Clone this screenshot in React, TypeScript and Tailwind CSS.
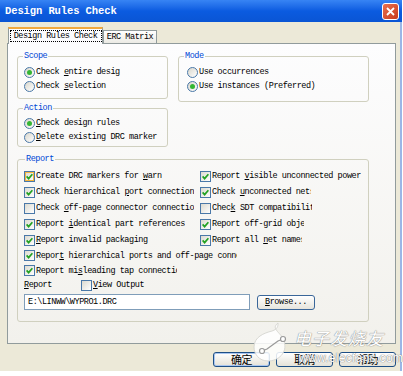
import React from "react";

function Txt({ t, u }: { t: string; u?: number }) {
  if (u === undefined || u < 0) return <>{t}</>;
  return (
    <>
      {t.slice(0, u)}
      <span className="underline underline-offset-[1px]">{t[u]}</span>
      {t.slice(u + 1)}
    </>
  );
}

function Radio({ checked }: { checked?: boolean }) {
  return (
    <span className="w-[11px] h-[11px] rounded-full border border-[#4a78a8] bg-linear-to-br from-[#d8d6cc] to-white flex items-center justify-center shrink-0">
      {checked && <span className="w-[5px] h-[5px] rounded-full bg-[#34b634]" />}
    </span>
  );
}

function Check({ checked, hover }: { checked?: boolean; hover?: boolean }) {
  return (
    <span
      className={
        "w-[11px] h-[11px] border border-[#4a78a8] bg-linear-to-br from-[#dcdad0] to-white flex items-center justify-center shrink-0 " +
        (hover ? "shadow-[inset_0_0_0_1px_#f6b53e]" : "")
      }
    >
      {checked && (
        <svg width="7" height="7" viewBox="0 0 7 7">
          <path d="M0.6 3.4 L2.6 5.6 L6.4 1.2" stroke="#21a121" strokeWidth="1.7" fill="none" />
        </svg>
      )}
    </span>
  );
}

function RadioRow({ t, u, checked }: { t: string; u?: number; checked?: boolean }) {
  return (
    <div className="h-[14px] flex items-center">
      <Radio checked={checked} />
      <span className="ml-[1px] whitespace-nowrap">
        <Txt t={t} u={u} />
      </span>
    </div>
  );
}

function CheckItem({ t, u, checked, hover, clip }: { t: string; u?: number; checked?: boolean; hover?: boolean; clip?: string }) {
  return (
    <div className="flex items-center">
      <Check checked={checked} hover={hover} />
      <span className={"ml-[1px] whitespace-nowrap overflow-hidden " + (clip || "")}>
        <Txt t={t} u={u} />
      </span>
    </div>
  );
}

function XPButton({ children, def }: { children: React.ReactNode; def?: boolean }) {
  return (
    <div
      className={
        "w-[57px] h-[15px] rounded-[3px] border border-[#1d4f86] bg-linear-to-b from-white to-[#e4e2d8] flex items-center justify-center text-[11px] leading-none font-['Noto_Sans_CJK_SC',sans-serif] " +
        (def ? "shadow-[inset_0_0_0_1px_#a9c6f0]" : "")
      }
    >
      {children}
    </div>
  );
}

export default function App() {
  return (
    <div className="w-[403px] h-[376px] bg-white relative overflow-hidden font-['Liberation_Mono','Noto_Sans_CJK_SC',monospace] text-[8.5px] leading-[10px] tracking-[-0.45px] text-black">
      <div className="w-[402px] h-[371px] flex flex-col">
        {/* Title bar */}
        <div className="h-[22px] shrink-0 flex items-center justify-between pl-[5px] pr-[3px] bg-linear-to-b from-[#3784f4] via-[#0b5be0] to-[#0a55d4]">
          <span className="text-white font-bold text-[10.5px] tracking-[-0.1px]">Design Rules Check</span>
          <div className="w-[17px] h-[17px] rounded-[3px] border border-white bg-linear-to-br from-[#e9704e] to-[#c8391a] flex items-center justify-center">
            <svg width="9" height="9" viewBox="0 0 9 9">
              <path d="M1 1 L8 8 M8 1 L1 8" stroke="white" strokeWidth="1.8" />
            </svg>
          </div>
        </div>

        {/* Body */}
        <div className="flex-1 bg-[#ece9d8] border-r-2 border-[#9cb6e6] flex flex-col">
          {/* Tabs */}
          <div className="mt-[5px] ml-[8px] h-[17px] flex items-end">
            <div className="relative z-10 w-[95px] h-[17px] border-x border-[#919b9c] border-t-2 border-t-[#f2a83c] bg-[#fcfcfe] flex items-start justify-center pt-[1px]">
              <span className="w-[92px] h-[12px] outline-1 outline-dotted outline-black -outline-offset-1 flex items-center justify-center">
                Design Rules Check
              </span>
            </div>
            <div className="w-[54px] h-[13px] mb-[1px] border border-b-0 border-[#919b9c] bg-linear-to-b from-white to-[#ecebe5] flex items-center justify-center">
              ERC Matrix
            </div>
          </div>

          {/* Panel */}
          <div className="ml-[7px] w-[389px] h-[301px] -mt-px border border-[#919b9c] bg-linear-to-b from-[#fdfdfe] to-[#f2f1ec] pt-[7px] px-[9px]">
            <div className="flex gap-[10px] items-start">
              <div className="w-[151px] flex flex-col">
                <fieldset className="border border-[#d0d0bf] rounded-[3px] px-[6px] pt-[4px] pb-[5px]">
                  <legend className="-ml-px px-px text-[#0046d5]">Scope</legend>
                  <RadioRow t="Check entire desig" u={6} checked />
                  <RadioRow t="Check selection" u={6} />
                </fieldset>
                <fieldset className="mt-[4px] border border-[#d0d0bf] rounded-[3px] px-[6px] pt-[3px] pb-[2px]">
                  <legend className="-ml-px px-px text-[#0046d5]">Action</legend>
                  <RadioRow t="Check design rules" u={0} checked />
                  <RadioRow t="Delete existing DRC marker" u={0} />
                </fieldset>
              </div>
              <fieldset className="w-[191px] border border-[#d0d0bf] rounded-[3px] px-[6px] pt-[4px] pb-[8px]">
                <legend className="-ml-px px-px text-[#0046d5]">Mode</legend>
                <div className="pl-[2px]">
                  <RadioRow t="Use occurrences" />
                  <RadioRow t="Use instances (Preferred)" checked />
                </div>
              </fieldset>
            </div>

            <fieldset className="mt-[7px] w-[352px] border border-[#d0d0bf] rounded-[3px] px-[6px] pt-[4px] pb-[11px]">
              <legend className="ml-[1px] px-px text-[#0046d5]">Report</legend>
              <div className="flex h-[16px] items-center">
                <div className="w-[176px]">
                  <CheckItem t="Create DRC markers for warn" u={23} checked hover />
                </div>
                <CheckItem t="Report visible unconnected power" u={7} checked />
              </div>
              <div className="flex h-[16px] items-center">
                <div className="w-[176px]">
                  <CheckItem t="Check hierarchical port connections" u={19} checked clip="w-[158px]" />
                </div>
                <CheckItem t="Check unconnected nets" u={6} checked clip="w-[99px]" />
              </div>
              <div className="flex h-[16px] items-center">
                <div className="w-[176px]">
                  <CheckItem t="Check off-page connector connections" u={6} clip="w-[158px]" />
                </div>
                <CheckItem t="Check SDT compatibility" u={4} clip="w-[100px]" />
              </div>
              <div className="flex h-[16px] items-center">
                <div className="w-[176px]">
                  <CheckItem t="Report identical part references" u={7} checked />
                </div>
                <CheckItem t="Report off-grid objects" checked clip="w-[92px]" />
              </div>
              <div className="flex h-[16px] items-center">
                <div className="w-[176px]">
                  <CheckItem t="Report invalid packaging" u={0} checked />
                </div>
                <CheckItem t="Report all net names" u={11} checked clip="w-[90px]" />
              </div>
              <div className="flex h-[15px] items-center">
                <CheckItem t="Report hierarchical ports and off-page connections" u={5} checked clip="w-[201px]" />
              </div>
              <div className="flex h-[15px] items-center">
                <CheckItem t="Report misleading tap connections" u={9} checked clip="w-[141px]" />
              </div>

              <div className="mt-[2px] h-[10px] flex items-center">
                <span className="w-[57px] whitespace-nowrap">
                  <Txt t="Report" u={0} />
                </span>
                <Check />
                <span className="ml-[1px] whitespace-nowrap">
                  <Txt t="View Output" u={0} />
                </span>
              </div>
              <div className="mt-[4px] flex items-center gap-[7px]">
                <div className="w-[226px] h-[16px] border border-[#7f9db9] bg-white pl-[3px] flex items-center whitespace-nowrap">
                  E:\LINWW\WYPRO1.DRC
                </div>
                <div className="w-[58px] h-[15px] rounded-[3px] border border-[#3a6699] bg-linear-to-b from-white to-[#e6e4dc] flex items-center justify-center whitespace-nowrap">
                  <Txt t="Browse..." u={0} />
                </div>
              </div>
            </fieldset>
          </div>

          {/* Buttons */}
          <div className="mt-[8px] flex justify-end gap-[6px] pr-[4px]">
            <XPButton def>确定</XPButton>
            <XPButton>取消</XPButton>
            <XPButton>帮助</XPButton>
          </div>
        </div>
      </div>

      {/* Watermark overlay */}
      <div className="absolute left-[252px] top-[321px] pointer-events-none">
        <svg width="42" height="42" viewBox="0 0 42 42">
          <path
            d="M26 2 C18 8 30 12 32 20 C36 32 26 40 16 40 C7 40 2 33 2 26 C2 16 12 12 20 10 C26 8 26 5 26 2 Z"
            fill="white"
            fillOpacity="0.85"
            stroke="#d9d9d4"
            strokeWidth="1"
          />
          <path d="M10 30 L15 28 L26 20 L31 18" stroke="#9a9a9a" strokeWidth="1.3" fill="none" />
          <circle cx="10" cy="30" r="2.5" fill="white" stroke="#9a9a9a" strokeWidth="1.2" />
          <circle cx="31" cy="18" r="2.5" fill="white" stroke="#9a9a9a" strokeWidth="1.2" />
        </svg>
      </div>
      <div className="absolute left-[294px] top-[329px] pointer-events-none text-white text-[17px] leading-none tracking-[1px] italic font-['Noto_Sans_CJK_SC',sans-serif] [text-shadow:0_0_1px_#8a8a8a,0_0_1px_#8a8a8a]">
        电子发烧友
      </div>
      <div className="absolute left-[299px] top-[352px] pointer-events-none text-white text-[12px] leading-none font-['Liberation_Sans',sans-serif] tracking-[0.3px] [text-shadow:0_0_1px_#7a7a7a,0_0_1px_#7a7a7a]">
        www.elecfans.com
      </div>
    </div>
  );
}
